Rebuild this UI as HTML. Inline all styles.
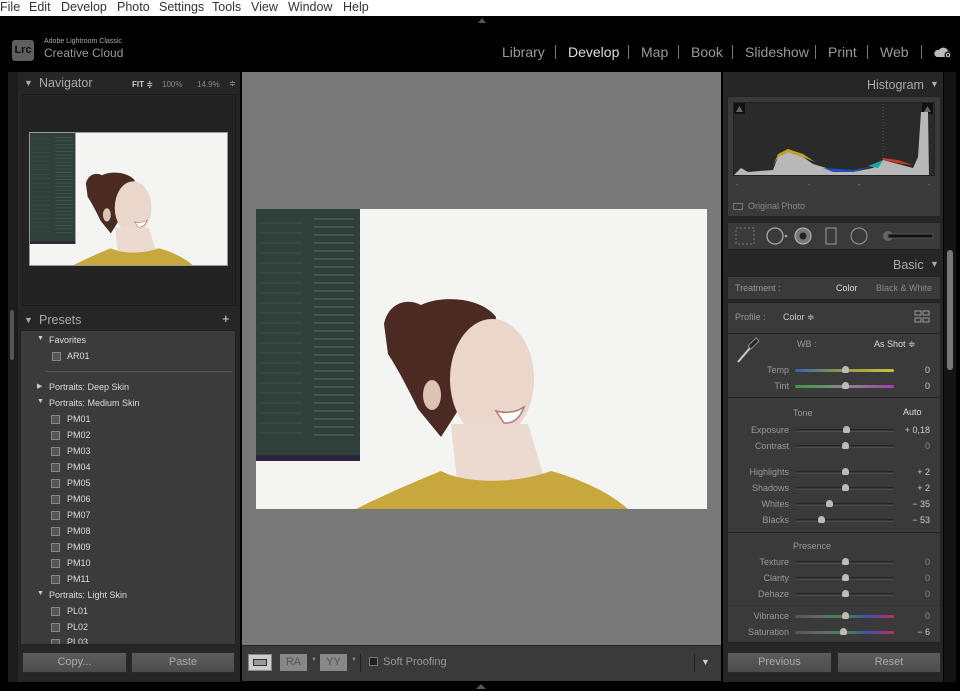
<!DOCTYPE html>
<html><head><meta charset="utf-8">
<style>
*{margin:0;padding:0;box-sizing:border-box}
body{width:960px;height:691px;overflow:hidden;background:#000;font-family:"Liberation Sans","DejaVu Sans",sans-serif;position:relative}
.a{position:absolute}
.t{position:absolute;white-space:nowrap}
.menu{left:0;top:0;width:960px;height:16px;background:#fff;color:#333;font-size:12.5px}
.menu span{position:absolute;top:0}
.mod{top:44px;font-size:14px;color:#9a9a9a}
.sep{top:45px;width:1px;height:14px;background:#777}
.lab{font-size:9px;color:#999;text-align:right;width:80px}
.val{font-size:9px;color:#ccc;text-align:right;width:40px}
.trk{height:3px;background:linear-gradient(#1a1a1a,#555);border-radius:2px}
.th{width:7px;height:7px;background:#bbb;border-radius:50% 50% 2px 2px}
.pi{font-size:9px;color:#ddd}
.ic{width:9px;height:9px;border:1px solid #888;background:#555}
.btn{background:linear-gradient(#5c5c5c,#4c4c4c);border:1px solid #2a2a2a;color:#aaa;font-size:11px;text-align:center;line-height:19px}
</style></head><body>
<div class="a menu">
<span style="left:0">File</span><span style="left:29px">Edit</span><span style="left:61px">Develop</span><span style="left:117px">Photo</span><span style="left:159px">Settings</span><span style="left:212px">Tools</span><span style="left:251px">View</span><span style="left:288px">Window</span><span style="left:343px">Help</span>
</div>
<div class="a" style="left:0;top:16px;width:960px;height:56px;background:#000"></div>
<div class="a" style="left:478px;top:18px;width:0;height:0;border-left:4px solid transparent;border-right:4px solid transparent;border-bottom:5px solid #555"></div>
<div class="a" style="left:12px;top:40px;width:22px;height:21px;background:#5e5e5e;border-radius:3px;color:#111;font-size:11px;font-weight:bold;text-align:center;line-height:21px">Lrc</div>
<div class="t" style="left:44px;top:38px;font-size:7px;color:#aaa">Adobe Lightroom Classic</div>
<div class="t" style="left:44px;top:46px;font-size:12px;color:#999">Creative Cloud</div>
<div class="t mod" style="left:502px">Library</div><div class="a sep" style="left:555px"></div>
<div class="t mod" style="left:568px;color:#ddd">Develop</div><div class="a sep" style="left:628px"></div>
<div class="t mod" style="left:641px">Map</div><div class="a sep" style="left:678px"></div>
<div class="t mod" style="left:691px">Book</div><div class="a sep" style="left:732px"></div>
<div class="t mod" style="left:745px">Slideshow</div><div class="a sep" style="left:815px"></div>
<div class="t mod" style="left:828px">Print</div><div class="a sep" style="left:867px"></div>
<div class="t mod" style="left:880px">Web</div><div class="a sep" style="left:921px"></div>
<svg class="a" style="left:934px;top:45px" width="20" height="14"><path d="M3 12h11a3 3 0 0 0 0-6 5 5 0 0 0-9-1 3.5 3.5 0 0 0-2 7z" fill="#bbb"/><circle cx="14" cy="10" r="3.5" fill="#000"/><circle cx="14" cy="10" r="2.3" fill="#bbb"/><circle cx="14" cy="10" r="1" fill="#000"/></svg>

<!-- left panel -->
<div class="a" style="left:8px;top:72px;width:10px;height:610px;background:#1c1c1c"></div>
<div class="a" style="left:10px;top:310px;width:4px;height:50px;background:#555;border-radius:2px"></div>
<div class="a" style="left:18px;top:72px;width:222px;height:610px;background:#262626"></div>
<div class="t" style="left:24px;top:78px;font-size:9px;color:#aaa">▼</div>
<div class="t" style="left:39px;top:76px;font-size:12.5px;color:#aaa">Navigator</div>
<div class="t" style="left:132px;top:80px;font-size:8px;color:#ccc;font-weight:bold">FIT ≑</div>
<div class="t" style="left:162px;top:80px;font-size:8px;color:#888">100%</div>
<div class="t" style="left:197px;top:80px;font-size:8px;color:#888">14.9%</div>
<div class="t" style="left:229px;top:79px;font-size:8px;color:#aaa">≑</div>
<div class="a" style="left:22px;top:94px;width:214px;height:212px;background:#232323;border:1px solid #1a1a1a"></div>
<svg class="a" style="left:29px;top:132px;border:1px solid #999" width="199" height="134" viewBox="0 0 451 300" preserveAspectRatio="none"><use href="#ph"/></svg>

<div class="t" style="left:24px;top:315px;font-size:9px;color:#aaa">▼</div>
<div class="t" style="left:39px;top:313px;font-size:12.5px;color:#aaa">Presets</div>
<div class="t" style="left:222px;top:311px;font-size:13px;color:#ddd">+</div>
<div class="a" style="left:20px;top:330px;width:216px;height:315px;background:#3b3b3b;border:1px solid #222;overflow:hidden">
<div class="t" style="left:16px;top:4px;font-size:7px;color:#ccc">▼</div><div class="t pi" style="left:28px;top:4px">Favorites</div>
<div class="a ic" style="left:31px;top:21px"></div><div class="t pi" style="left:46px;top:20px">AR01</div>
<div class="a" style="left:24px;top:40px;width:187px;height:1px;background:#555"></div>
<div class="t" style="left:16px;top:51px;font-size:7px;color:#ccc">▶</div><div class="t pi" style="left:28px;top:51px">Portraits: Deep Skin</div>
<div class="t" style="left:16px;top:67px;font-size:7px;color:#ccc">▼</div><div class="t pi" style="left:28px;top:67px">Portraits: Medium Skin</div>
<div class="a ic" style="left:30px;top:84px"></div><div class="t pi" style="left:46px;top:83px">PM01</div>
<div class="a ic" style="left:30px;top:100px"></div><div class="t pi" style="left:46px;top:99px">PM02</div>
<div class="a ic" style="left:30px;top:116px"></div><div class="t pi" style="left:46px;top:115px">PM03</div>
<div class="a ic" style="left:30px;top:132px"></div><div class="t pi" style="left:46px;top:131px">PM04</div>
<div class="a ic" style="left:30px;top:148px"></div><div class="t pi" style="left:46px;top:147px">PM05</div>
<div class="a ic" style="left:30px;top:164px"></div><div class="t pi" style="left:46px;top:163px">PM06</div>
<div class="a ic" style="left:30px;top:180px"></div><div class="t pi" style="left:46px;top:179px">PM07</div>
<div class="a ic" style="left:30px;top:196px"></div><div class="t pi" style="left:46px;top:195px">PM08</div>
<div class="a ic" style="left:30px;top:212px"></div><div class="t pi" style="left:46px;top:211px">PM09</div>
<div class="a ic" style="left:30px;top:228px"></div><div class="t pi" style="left:46px;top:227px">PM10</div>
<div class="a ic" style="left:30px;top:244px"></div><div class="t pi" style="left:46px;top:243px">PM11</div>
<div class="t" style="left:16px;top:259px;font-size:7px;color:#ccc">▼</div><div class="t pi" style="left:28px;top:259px">Portraits: Light Skin</div>
<div class="a ic" style="left:30px;top:276px"></div><div class="t pi" style="left:46px;top:275px">PL01</div>
<div class="a ic" style="left:30px;top:292px"></div><div class="t pi" style="left:46px;top:291px">PL02</div>
<div class="a ic" style="left:30px;top:308px"></div><div class="t pi" style="left:46px;top:306px">PL03</div>
</div>
<div class="a btn" style="left:22px;top:652px;width:105px;height:21px">Copy...</div>
<div class="a btn" style="left:131px;top:652px;width:104px;height:21px">Paste</div>

<!-- center -->
<div class="a" style="left:242px;top:72px;width:479px;height:573px;background:#787878"></div>
<svg class="a" style="left:256px;top:209px" width="451" height="300" viewBox="0 0 451 300">
<defs><g id="ph">
<rect width="451" height="300" fill="#f4f4f2"/>
<rect x="0" y="0" width="104" height="252" fill="#2f3f3a"/>
<rect x="0" y="246" width="104" height="6" fill="#2a2438"/>
<g stroke-width="1.6">
<path stroke="#4b5e57" d="M58 10h40M58 18h40M58 26h40M58 34h40M58 42h40M58 50h40M58 58h40M58 66h40M58 74h40M58 82h40M58 90h40M58 98h40M58 106h40M58 114h40M58 122h40M58 130h40M58 138h40M58 146h40M58 154h40M58 162h40M58 170h40M58 178h40M58 186h40M58 194h40M58 202h40M58 210h40M58 218h40M58 226h40"/>
<path stroke="#3c4d47" d="M4 14h42M4 24h42M4 34h42M4 44h42M4 54h42M4 64h42M4 74h42M4 84h42M4 94h42M4 104h42M4 114h42M4 124h42M4 134h42M4 144h42M4 154h42M4 164h42M4 174h42M4 184h42M4 194h42M4 204h42M4 214h42M4 224h42"/>
</g>
<path d="M128 115 C132 95 150 88 165 96 C185 86 225 88 240 108 L235 150 L185 228 L162 200 C152 180 142 160 132 145 Z" fill="#4a2a22"/>
<ellipse cx="236" cy="170" rx="42" ry="60" fill="#ead6ca"/>
<ellipse cx="176" cy="186" rx="9" ry="15" fill="#ddc3b4"/>
<path d="M195 215 L272 215 L288 268 L202 282 Z" fill="#ecdad0"/>
<path d="M240 202 Q256 206 268 198 Q262 215 248 214 Z" fill="#fff" stroke="#b87a70" stroke-width="1.5"/>
<path d="M100 300 C130 285 165 270 185 262 C210 275 260 275 295 262 C330 272 355 285 372 300 Z" fill="#c8a83c"/>
</g></defs>
<use href="#ph"/>
</svg>
<div class="a" style="left:242px;top:645px;width:479px;height:36px;background:#3a3a3a;border-top:1px solid #222"></div>
<div class="a" style="left:248px;top:654px;width:24px;height:17px;background:#ccc;border:1px solid #888"><div style="margin:4px 4px;height:7px;border:1px solid #333;background:#999"></div></div>
<div class="a" style="left:280px;top:654px;width:27px;height:17px;background:#888;color:#555;font-size:11px;text-align:center;line-height:17px">RA</div>
<div class="t" style="left:311px;top:657px;font-size:6px;color:#888">▼</div>
<div class="a" style="left:320px;top:654px;width:27px;height:17px;background:#888;color:#555;font-size:11px;text-align:center;line-height:17px">YY</div>
<div class="t" style="left:351px;top:657px;font-size:6px;color:#888">▼</div>
<div class="a" style="left:360px;top:654px;width:1px;height:18px;background:#222"></div>
<div class="a" style="left:369px;top:657px;width:9px;height:9px;background:#222;border:1px solid #777"></div>
<div class="t" style="left:383px;top:656px;font-size:11px;color:#999">Soft Proofing</div>
<div class="a" style="left:694px;top:654px;width:1px;height:18px;background:#222"></div>
<div class="t" style="left:701px;top:657px;font-size:9px;color:#ccc">▼</div>
<div class="a" style="left:476px;top:684px;width:0;height:0;border-left:5px solid transparent;border-right:5px solid transparent;border-bottom:5px solid #555"></div>

<!-- right panel -->
<div class="a" style="left:723px;top:72px;width:220px;height:610px;background:#262626"></div>
<div class="a" style="left:944px;top:72px;width:12px;height:610px;background:#141414"></div>
<div class="a" style="left:947px;top:250px;width:6px;height:120px;background:#777;border-radius:3px"></div>
<div class="t" style="left:867px;top:78px;font-size:12.5px;color:#aaa">Histogram</div>
<div class="t" style="left:930px;top:79px;font-size:9px;color:#aaa">▼</div>
<div class="a" style="left:727px;top:96px;width:214px;height:121px;background:#3a3a3a;border:1px solid #222"></div>
<svg class="a" style="left:733px;top:102px" width="202" height="74">
<rect width="202" height="74" fill="#2a2a2a" stroke="#1a1a1a"/>
<rect x="1" y="1" width="11" height="11" fill="#111"/><path d="M3 10l3.5-6 3.5 6z" fill="#666"/>
<rect x="189" y="1" width="11" height="11" fill="#111"/><path d="M191 10l3.5-6 3.5 6z" fill="#666"/>
<line x1="150" y1="2" x2="150" y2="72" stroke="#555" stroke-dasharray="1,2"/>
<path d="M1 73 L8 66 L15 70 L40 68 L45 55 L55 50 L70 55 L80 62 L100 68 L120 70 L140 66 L150 58 L165 62 L180 66 L185 55 L188 10 L195 10 L196 73 Z" fill="#b8b8b8"/>
<path d="M40 64 L45 52 L55 47 L70 52 L82 60 L70 55 L55 50 L45 55Z" fill="#c8a020"/>
<path d="M150 56 L165 58 L180 63 L170 62 L150 58Z" fill="#c04020"/>
<path d="M90 66 L120 68 L140 64 L120 70 L100 70Z" fill="#2050c0"/>
<path d="M135 64 L150 58 L145 66Z" fill="#20a0a0"/>
</svg>
<div class="t" style="left:736px;top:180px;font-size:8px;color:#888">-</div><div class="t" style="left:808px;top:180px;font-size:8px;color:#888">-</div><div class="t" style="left:858px;top:180px;font-size:8px;color:#888">-</div><div class="t" style="left:928px;top:180px;font-size:8px;color:#888">-</div>
<div class="a" style="left:733px;top:203px;width:10px;height:7px;border:1px solid #777"></div>
<div class="t" style="left:748px;top:201px;font-size:9px;color:#888">Original Photo</div>
<div class="a" style="left:727px;top:222px;width:214px;height:28px;background:#3a3a3a;border:1px solid #222"></div>
<svg class="a" style="left:733px;top:226px" width="205" height="20">
<rect x="3" y="2" width="18" height="16" fill="none" stroke="#777" stroke-dasharray="2,2"/>
<circle cx="42" cy="10" r="8" fill="none" stroke="#aaa" stroke-width="1.3"/><circle cx="53" cy="10" r="1.3" fill="#aaa"/>
<circle cx="70" cy="10" r="8" fill="#777" stroke="#bbb"/><circle cx="70" cy="10" r="3.5" fill="#222"/>
<rect x="93" y="2" width="10" height="16" fill="none" stroke="#999"/>
<circle cx="126" cy="10" r="8" fill="none" stroke="#999"/>
<circle cx="155" cy="10" r="5" fill="#666"/><rect x="155" y="8" width="45" height="4" fill="#111" stroke="#555"/>
</svg>
<div class="t" style="left:893px;top:258px;font-size:12.5px;color:#aaa">Basic</div>
<div class="t" style="left:930px;top:259px;font-size:9px;color:#aaa">▼</div>
<div class="a" style="left:727px;top:276px;width:214px;height:24px;background:#3a3a3a;border:1px solid #222"></div>
<div class="t" style="left:735px;top:283px;font-size:9px;color:#999">Treatment :</div>
<div class="t" style="left:836px;top:283px;font-size:9px;color:#ddd">Color</div>
<div class="t" style="left:876px;top:283px;font-size:9px;color:#888">Black &amp; White</div>
<div class="a" style="left:727px;top:302px;width:214px;height:341px;background:#3a3a3a;border:1px solid #222"></div>
<div class="t" style="left:735px;top:312px;font-size:9px;color:#999">Profile :</div>
<div class="t" style="left:783px;top:312px;font-size:9px;color:#ccc">Color ≑</div>
<svg class="a" style="left:914px;top:310px" width="17" height="14"><g fill="none" stroke="#999"><rect x="1" y="1" width="6" height="4"/><rect x="9" y="1" width="6" height="4"/><rect x="1" y="8" width="6" height="4"/><rect x="9" y="8" width="6" height="4"/></g></svg>
<div class="a" style="left:728px;top:333px;width:212px;height:1px;background:#222"></div>
<svg class="a" style="left:734px;top:336px" width="26" height="28"><path d="M4 26 L16 12" stroke="#ccc" stroke-width="2"/><path d="M14 10 L22 2 L25 5 L17 13Z" fill="#222" stroke="#888"/></svg>
<div class="t" style="left:797px;top:339px;font-size:9px;color:#999">WB :</div>
<div class="t" style="left:874px;top:339px;font-size:9px;color:#ddd">As Shot ≑</div>
<div class="a" style="left:728px;top:397px;width:212px;height:1px;background:#222"></div>
<div class="t" style="left:793px;top:408px;font-size:9px;color:#999">Tone</div>
<div class="t" style="left:903px;top:407px;font-size:9px;color:#ddd">Auto</div>
<div class="a" style="left:728px;top:532px;width:212px;height:1px;background:#222"></div>
<div class="t" style="left:793px;top:541px;font-size:9px;color:#999">Presence</div>
<div class="a" style="left:728px;top:605px;width:212px;height:1px;background:#333"></div>

<!-- sliders -->
<div class="t lab" style="left:709px;top:365px">Temp</div><div class="a trk" style="left:795px;top:369px;width:99px;background:linear-gradient(90deg,#3a5fb0,#9a9a40,#c8c040)"></div><div class="a th" style="left:842px;top:366px"></div><div class="t val" style="left:890px;top:365px">0</div>
<div class="t lab" style="left:709px;top:381px">Tint</div><div class="a trk" style="left:795px;top:385px;width:99px;background:linear-gradient(90deg,#3a9a40,#888,#a040b0)"></div><div class="a th" style="left:842px;top:382px"></div><div class="t val" style="left:890px;top:381px">0</div>
<div class="t lab" style="left:709px;top:425px">Exposure</div><div class="a trk" style="left:795px;top:429px;width:99px"></div><div class="a th" style="left:843px;top:426px"></div><div class="t val" style="left:890px;top:425px">+ 0,18</div>
<div class="t lab" style="left:709px;top:441px">Contrast</div><div class="a trk" style="left:795px;top:445px;width:99px"></div><div class="a th" style="left:842px;top:442px"></div><div class="t val" style="left:890px;top:441px;color:#888">0</div>
<div class="t lab" style="left:709px;top:467px">Highlights</div><div class="a trk" style="left:795px;top:471px;width:99px"></div><div class="a th" style="left:842px;top:468px"></div><div class="t val" style="left:890px;top:467px">+ 2</div>
<div class="t lab" style="left:709px;top:483px">Shadows</div><div class="a trk" style="left:795px;top:487px;width:99px"></div><div class="a th" style="left:842px;top:484px"></div><div class="t val" style="left:890px;top:483px">+ 2</div>
<div class="t lab" style="left:709px;top:499px">Whites</div><div class="a trk" style="left:795px;top:503px;width:99px"></div><div class="a th" style="left:826px;top:500px"></div><div class="t val" style="left:890px;top:499px">− 35</div>
<div class="t lab" style="left:709px;top:515px">Blacks</div><div class="a trk" style="left:795px;top:519px;width:99px"></div><div class="a th" style="left:818px;top:516px"></div><div class="t val" style="left:890px;top:515px">− 53</div>
<div class="t lab" style="left:709px;top:557px">Texture</div><div class="a trk" style="left:795px;top:561px;width:99px"></div><div class="a th" style="left:842px;top:558px"></div><div class="t val" style="left:890px;top:557px;color:#888">0</div>
<div class="t lab" style="left:709px;top:573px">Clarity</div><div class="a trk" style="left:795px;top:577px;width:99px"></div><div class="a th" style="left:842px;top:574px"></div><div class="t val" style="left:890px;top:573px;color:#888">0</div>
<div class="t lab" style="left:709px;top:589px">Dehaze</div><div class="a trk" style="left:795px;top:593px;width:99px"></div><div class="a th" style="left:842px;top:590px"></div><div class="t val" style="left:890px;top:589px;color:#888">0</div>
<div class="t lab" style="left:709px;top:611px">Vibrance</div><div class="a trk" style="left:795px;top:615px;width:99px;background:linear-gradient(90deg,#555,#666,#3a8a50,#4050b0,#c03050)"></div><div class="a th" style="left:842px;top:612px"></div><div class="t val" style="left:890px;top:611px;color:#888">0</div>
<div class="t lab" style="left:709px;top:627px">Saturation</div><div class="a trk" style="left:795px;top:631px;width:99px;background:linear-gradient(90deg,#555,#666,#3a8a50,#4050b0,#c03050)"></div><div class="a th" style="left:840px;top:628px"></div><div class="t val" style="left:890px;top:627px">− 6</div>

<div class="a btn" style="left:727px;top:652px;width:105px;height:21px">Previous</div>
<div class="a btn" style="left:837px;top:652px;width:104px;height:21px">Reset</div>
</body></html>
